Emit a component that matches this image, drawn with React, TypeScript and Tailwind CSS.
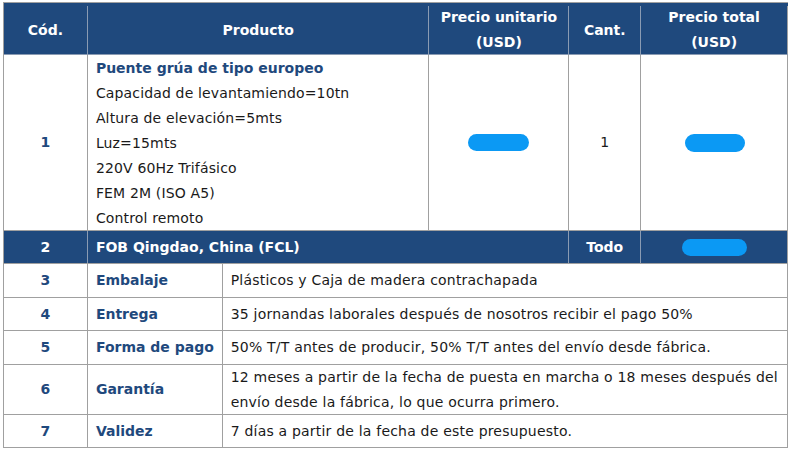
import React from "react";

const font = { fontFamily: '"DejaVu Sans", Verdana, sans-serif' };

const Blob = ({ w, h }: { w: number; h: number }) => (
  <span
    className="inline-block rounded-full bg-[#0b99f4] blur-[0.6px]"
    style={{ width: w, height: h }}
  />
);

const terms = [
  { n: "3", label: "Embalaje", text: ["Plásticos y Caja de madera contrachapada"], h: "h-[34px]" },
  { n: "4", label: "Entrega", text: ["35 jornandas laborales después de nosotros recibir el pago 50%"], h: "h-[33px]" },
  { n: "5", label: "Forma de pago", text: ["50% T/T antes de producir, 50% T/T antes del envío desde fábrica."], h: "h-[34px]" },
  {
    n: "6",
    label: "Garantía",
    text: [
      "12 meses a partir de la fecha de puesta en marcha o 18 meses después del",
      "envío desde la fábrica, lo que ocurra primero.",
    ],
    h: "h-[50px]",
  },
  { n: "7", label: "Validez", text: ["7 días a partir de la fecha de este presupuesto."], h: "h-[33px]" },
];

export default function App() {
  return (
    <div className="w-[790px] h-[451px] bg-white pt-[2px] pl-[3px]" style={font}>
      <div className="w-[785px] border-l border-t border-[#a0a0a0] text-[14px] leading-[25px]">
        {/* Header */}
        <div className="flex h-[52px] pt-[3px] bg-[#1f497d] text-white font-bold border-b border-[#8a9bb3]">
          <div className="w-[84px] flex items-center justify-center border-r border-[#8a9bb3]">Cód.</div>
          <div className="w-[342px] flex items-center justify-center border-r border-[#8a9bb3]">Producto</div>
          <div className="w-[140px] flex items-center justify-center text-center border-r border-[#8a9bb3]">
            Precio unitario
            <br />
            (USD)
          </div>
          <div className="w-[72px] flex items-center justify-center border-r border-[#8a9bb3]">Cant.</div>
          <div className="w-[147px] flex items-center justify-center text-center border-r border-[#a0a0a0]">
            Precio total
            <br />
            (USD)
          </div>
        </div>

        {/* Product row */}
        <div className="flex h-[176px] border-b border-[#a0a0a0] text-[#1a1a1a]">
          <div className="w-[84px] flex items-center justify-center border-r border-[#a0a0a0] font-bold text-[#1f497d]">
            1
          </div>
          <div className="w-[342px] pl-[8px] pt-[1px] border-r border-[#a0a0a0] tracking-[0.15px]">
            <div className="font-bold text-[#1f497d] tracking-normal">Puente grúa de tipo europeo</div>
            <div>Capacidad de levantamiendo=10tn</div>
            <div>Altura de elevación=5mts</div>
            <div>Luz=15mts</div>
            <div>220V 60Hz Trifásico</div>
            <div>FEM 2M (ISO A5)</div>
            <div>Control remoto</div>
          </div>
          <div className="w-[140px] flex items-center justify-center border-r border-[#a0a0a0]">
            <Blob w={61} h={17} />
          </div>
          <div className="w-[72px] flex items-center justify-center border-r border-[#a0a0a0]">1</div>
          <div className="w-[147px] flex items-center justify-center border-r border-[#a0a0a0] pl-[2px]">
            <Blob w={60} h={18} />
          </div>
        </div>

        {/* FOB row */}
        <div className="flex h-[33px] bg-[#1f497d] text-white font-bold border-b border-[#a0a0a0]">
          <div className="w-[84px] flex items-center justify-center border-r border-[#8a9bb3]">2</div>
          <div className="w-[482px] flex items-center pl-[8px] border-r border-[#8a9bb3]">FOB Qingdao, China (FCL)</div>
          <div className="w-[72px] flex items-center justify-center border-r border-[#8a9bb3]">Todo</div>
          <div className="w-[147px] flex items-center justify-center border-r border-[#a0a0a0]">
            <Blob w={65} h={17} />
          </div>
        </div>

        {/* Terms */}
        {terms.map((t) => (
          <div key={t.n} className={`flex ${t.h} border-b border-[#a0a0a0]`}>
            <div className="w-[84px] flex items-center justify-center border-r border-[#a0a0a0] font-bold text-[#1f497d]">
              {t.n}
            </div>
            <div className="w-[135px] flex items-center pl-[8px] border-r border-[#a0a0a0] font-bold text-[#1f497d] whitespace-nowrap">
              {t.label}
            </div>
            <div className="w-[566px] flex flex-col justify-center pl-[8px] border-r border-[#a0a0a0] text-[#1a1a1a] whitespace-nowrap tracking-[0.2px]">
              {t.text.map((line) => (
                <div key={line}>{line}</div>
              ))}
            </div>
          </div>
        ))}
      </div>
    </div>
  );
}
